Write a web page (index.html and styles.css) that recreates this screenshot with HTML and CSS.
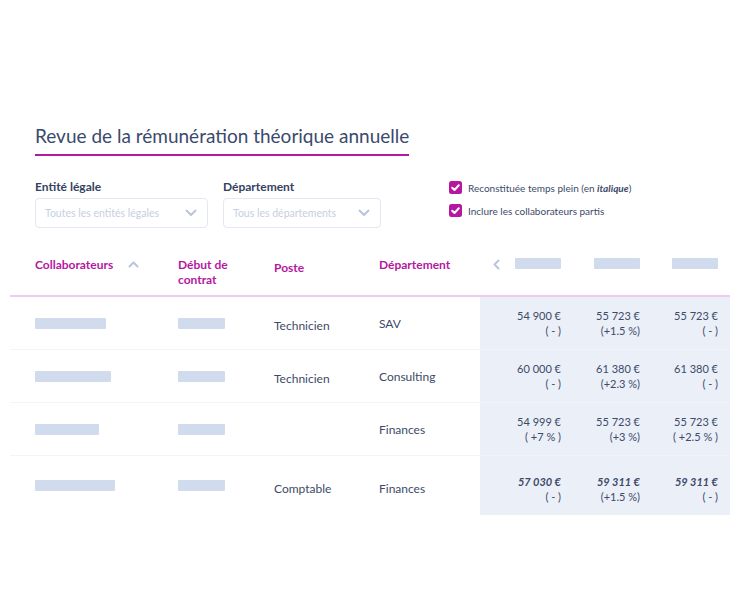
FILE: index.html
```html
<!DOCTYPE html><html lang="fr">
<head>
  <meta charset="UTF-8">
  <title>Revue de la rémunération théorique annuelle</title>
  <meta name="viewport" content="width=device-width, initial-scale=1">
  <link rel="stylesheet" href="styles.css">
</head>
<body>
<div class="page">
  <h1 class="titre">Revue de la rémunération théorique annuelle</h1>

  <div class="filtres">
    <div class="filtre">
      <label class="filtre-label">Entité légale</label>
      <div class="select large">
        <span>Toutes les entités légales</span>
        <svg width="12" height="8" viewBox="0 0 12 8"><path d="M1.5 1.5 L6 6 L10.5 1.5" fill="none" stroke="#b9c5de" stroke-width="2" stroke-linecap="round" stroke-linejoin="round"/></svg>
      </div>
    </div>
    <div class="filtre">
      <label class="filtre-label">Département</label>
      <div class="select">
        <span>Tous les départements</span>
        <svg width="12" height="8" viewBox="0 0 12 8"><path d="M1.5 1.5 L6 6 L10.5 1.5" fill="none" stroke="#b9c5de" stroke-width="2" stroke-linecap="round" stroke-linejoin="round"/></svg>
      </div>
    </div>
    <div class="options">
      <div class="option">
        <svg width="13" height="13" viewBox="0 0 13 13"><rect width="13" height="13" rx="2.5" fill="#b5179f"/><path d="M3.2 6.7 L5.5 9 L9.8 4.3" fill="none" stroke="#fff" stroke-width="2" stroke-linecap="round" stroke-linejoin="round"/></svg>
        <span>Reconstituée temps plein (en <b><i>italique</i></b>)</span>
      </div>
      <div class="option">
        <svg width="13" height="13" viewBox="0 0 13 13"><rect width="13" height="13" rx="2.5" fill="#b5179f"/><path d="M3.2 6.7 L5.5 9 L9.8 4.3" fill="none" stroke="#fff" stroke-width="2" stroke-linecap="round" stroke-linejoin="round"/></svg>
        <span>Inclure les collaborateurs partis</span>
      </div>
    </div>
  </div>
</div>

<div class="tableau">
  <div class="ligne entete">
    <div class="cell col-nom">Collaborateurs
      <svg class="tri" width="11" height="7" viewBox="0 0 11 7"><path d="M1.5 5.5 L5.5 1.5 L9.5 5.5" fill="none" stroke="#b9c5de" stroke-width="2" stroke-linecap="round" stroke-linejoin="round"/></svg>
    </div>
    <div class="cell">Début de<br>contrat</div>
    <div class="cell poste">Poste</div>
    <div class="cell">Département</div>
    <div class="cell num premier">
      <svg class="prec" width="7" height="11" viewBox="0 0 7 11"><path d="M5.5 1.5 L1.5 5.5 L5.5 9.5" fill="none" stroke="#b9c5de" stroke-width="2" stroke-linecap="round" stroke-linejoin="round"/></svg>
      <span class="barre mois"></span>
    </div>
    <div class="cell num"><span class="barre mois"></span></div>
    <div class="cell num"><span class="barre mois"></span></div>
    <div class="cell fin"></div>
  </div>

  <div class="ligne">
    <div class="cell"><span class="barre" style="width:71px"></span></div>
    <div class="cell"><span class="barre" style="width:47px"></span></div>
    <div class="cell bas">Technicien</div>
    <div class="cell">SAV</div>
    <div class="cell num bleu"><span>54 900 €<br>( - )</span></div>
    <div class="cell num bleu"><span>55 723 €<br>(+1.5 %)</span></div>
    <div class="cell num bleu"><span>55 723 €<br>( - )</span></div>
    <div class="cell fin bleu"></div>
  </div>

  <div class="ligne">
    <div class="cell"><span class="barre" style="width:76px"></span></div>
    <div class="cell"><span class="barre" style="width:47px"></span></div>
    <div class="cell bas">Technicien</div>
    <div class="cell">Consulting</div>
    <div class="cell num bleu"><span>60 000 €<br>( - )</span></div>
    <div class="cell num bleu"><span>61 380 €<br>(+2.3 %)</span></div>
    <div class="cell num bleu"><span>61 380 €<br>( - )</span></div>
    <div class="cell fin bleu"></div>
  </div>

  <div class="ligne">
    <div class="cell"><span class="barre" style="width:64px"></span></div>
    <div class="cell"><span class="barre" style="width:47px"></span></div>
    <div class="cell"></div>
    <div class="cell">Finances</div>
    <div class="cell num bleu"><span>54 999 €<br>( +7 % )</span></div>
    <div class="cell num bleu"><span>55 723 €<br>(+3 %)</span></div>
    <div class="cell num bleu"><span>55 723 €<br>( +2.5 % )</span></div>
    <div class="cell fin bleu"></div>
  </div>

  <div class="ligne derniere">
    <div class="cell"><span class="barre" style="width:80px"></span></div>
    <div class="cell"><span class="barre" style="width:47px"></span></div>
    <div class="cell bas">Comptable</div>
    <div class="cell bas">Finances</div>
    <div class="cell num bleu"><span><b><i>57 030 €</i></b><br>( - )</span></div>
    <div class="cell num bleu"><span><b><i>59 311 €</i></b><br>(+1.5 %)</span></div>
    <div class="cell num bleu"><span><b><i>59 311 €</i></b><br>( - )</span></div>
    <div class="cell fin bleu"></div>
  </div>
</div>
</body>
</html>
```

FILE: styles.css
```css
body {
  margin: 0;
  background: white;
  font-family: Lato, "Liberation Sans", sans-serif;
  color: #3d4a68;
}
.page {
  padding: 124px 0 0 35px;
}
.titre {
  display: inline-block;
  margin: 0;
  padding-bottom: 6px;
  font-size: 19px;
  line-height: 24px;
  font-weight: normal;
  color: #3b4a6c;
  border-bottom: 2px solid #b5179f;
}
.filtres {
  display: flex;
  margin-top: 23px;
}
.filtre {
  margin-right: 15px;
}
.filtre-label {
  display: block;
  font-size: 12px;
  font-weight: bold;
  line-height: 16px;
  color: #34425f;
}
.select {
  display: flex;
  align-items: center;
  justify-content: space-between;
  margin-top: 3px;
  width: 158px;
  height: 30px;
  padding: 0 10px 0 9px;
  box-sizing: border-box;
  border: 1px solid #e3e8f3;
  border-radius: 4px;
  font-size: 10.5px;
  color: #c6cfe2;
}
.select.large {
  width: 173px;
}
.options {
  margin-left: 53px;
  margin-top: 2px;
}
.option {
  display: flex;
  align-items: center;
  height: 13px;
  margin-bottom: 10px;
  font-size: 10px;
  color: #3d4a68;
}
.option svg {
  margin-right: 6px;
}
.tableau {
  margin: 22px 10px 0 10px;
}
.ligne {
  display: grid;
  grid-template-columns: 143px 96px 105px 101px 81px 79px 78px 12px;
  padding-left: 25px;
  border-bottom: 1px solid #f3f4fa;
  font-size: 12px;
}
.ligne .cell {
  display: flex;
  align-items: center;
  min-height: 52px;
  line-height: 15px;
}
.ligne .cell.bas {
  padding-top: 5px;
  box-sizing: border-box;
}
.entete {
  border-bottom: 2px solid #f1c9ec;
  font-weight: bold;
  color: #b5179f;
}
.entete .cell {
  align-items: flex-start;
  min-height: 45px;
  padding-top: 7px;
  box-sizing: border-box;
}
.entete .poste {
  padding-top: 10px;
}
.tri {
  margin-left: 15px;
  margin-top: 4px;
}
.num {
  justify-content: flex-end;
  text-align: right;
  font-size: 11px;
}
.entete .num {
  padding-top: 8px;
}
.premier {
  position: relative;
}
.prec {
  position: absolute;
  left: 13px;
  top: 9px;
}
.bleu {
  background: #eaeff8;
}
.barre {
  display: inline-block;
  height: 11px;
  border-radius: 1px;
  background: #d0dcee;
}
.mois {
  width: 46px;
}
.derniere {
  border-bottom: none;
}
.derniere .cell {
  min-height: 59px;
}
.derniere .cell.num {
  padding-top: 6px;
  box-sizing: border-box;
}
```
